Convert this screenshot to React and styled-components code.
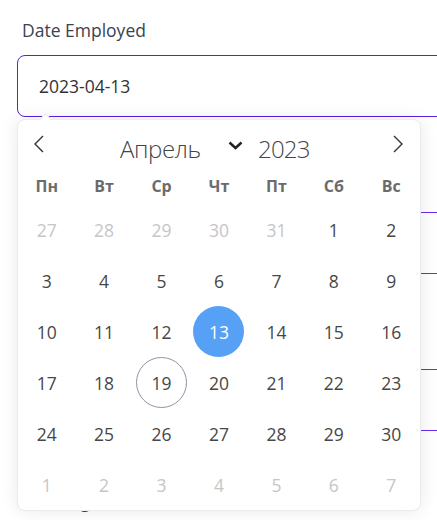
import styled, { createGlobalStyle } from 'styled-components'

const GlobalStyle = createGlobalStyle`
  html, body {
    margin: 0;
    padding: 0;
    background: #ffffff;
    overflow: hidden;
  }
  body {
    font-family: 'Open Sans', 'Noto Sans', sans-serif;
  }
`

const Page = styled.div`
  position: relative;
  width: 460px;
  padding: 18px 0 0 17px;
`
const Field = styled.div`
  display: flex;
  flex-direction: column;
  margin-bottom: 58px;
`
const Label = styled.label`
  font-size: 17.5px;
  line-height: 24px;
  color: #3b4250;
  padding-left: 5px;
  margin-bottom: 13px;
`
const Input = styled.div`
  height: 60px;
  border: 1px solid ${(p) => (p.$active ? '#5720e6' : '#6a2cf0')};
  border-radius: 8px;
  display: flex;
  align-items: center;
  padding-left: 21px;
  font-size: 17.5px;
  color: #333;
`

const Popup = styled.div`
  position: absolute;
  top: 119px;
  left: 17px;
  width: 404px;
  background: #fff;
  border: 1px solid #ececec;
  box-sizing: border-box;
  border-radius: 8px;
  box-shadow: 0 0 18px rgba(0, 0, 0, 0.09);
`
const Notch = styled.span`
  position: absolute;
  top: -5px;
  left: 23px;
  width: 8px;
  height: 8px;
  background: #fff;
  border-top: 1px solid #e6e6e6;
  border-left: 1px solid #e6e6e6;
  transform: rotate(45deg);
`
const Header = styled.div`
  height: 48px;
  display: flex;
  align-items: center;
  padding: 0 15px 0 14px;
`
const NavButton = styled.button`
  border: none;
  background: none;
  padding: 0;
  width: 14px;
  height: 20px;
  display: flex;
  align-items: center;
  justify-content: center;
  color: #333;
`
const MonthYear = styled.div`
  flex: 1;
  display: flex;
  align-items: center;
  padding-top: 8px;
  margin-left: 74px;
`
const MonthText = styled.span`
  font-size: 24px;
  font-weight: 300;
  letter-spacing: -0.4px;
  color: #444;
  width: 108px;
  white-space: nowrap;
`
const Caret = styled.span`
  display: flex;
  margin: -6px 15px 0 0;
  color: #222;
`
const YearText = styled.span`
  font-size: 24px;
  font-weight: 300;
  letter-spacing: -0.8px;
  color: #444;
`
const Grid = styled.div`
  display: grid;
  grid-template-columns: repeat(7, 1fr);
`
const WeekDay = styled.div`
  height: 36px;
  display: flex;
  align-items: center;
  justify-content: center;
  font-size: 16px;
  font-weight: 700;
  color: #6b6b6b;
`
const Day = styled.div`
  justify-self: center;
  width: 51px;
  height: 51px;
  box-sizing: border-box;
  border-radius: 50%;
  display: flex;
  align-items: center;
  justify-content: center;
  font-size: 17.5px;
  color: ${(p) => (p.$selected ? '#fff' : p.$outside ? '#c6c6c6' : '#474747')};
  background: ${(p) => (p.$selected ? '#56a0f6' : 'transparent')};
  border: 1px solid ${(p) => (p.$today ? '#8d95a3' : 'transparent')};
`

const weekDays = ['Пн', 'Вт', 'Ср', 'Чт', 'Пт', 'Сб', 'Вс']

const days = [
  ...[27, 28, 29, 30, 31].map((d) => ({ d, outside: true })),
  ...Array.from({ length: 30 }, (_, i) => ({ d: i + 1 })),
  ...[1, 2, 3, 4, 5, 6, 7].map((d) => ({ d, outside: true })),
]

const fields = ['Date Employed', 'Job Title', 'Department', 'Working Hours']

export default function App() {
  return (
    <>
      <GlobalStyle />
      <Page>
        {fields.map((f, i) => (
          <Field key={f}>
            <Label>{f}</Label>
            <Input $active={i === 0}>{i === 0 ? '2023-04-13' : ''}</Input>
          </Field>
        ))}
        <Popup>
          <Notch />
          <Header>
            <NavButton>
              <svg width="12" height="18" viewBox="0 0 12 18">
                <polyline points="10,1 2,9 10,17" fill="none" stroke="#333" strokeWidth="1.4" />
              </svg>
            </NavButton>
            <MonthYear>
              <MonthText>Апрель</MonthText>
              <Caret>
                <svg width="15" height="9" viewBox="0 0 15 9">
                  <polyline points="1.5,1.5 7.5,7 13.5,1.5" fill="none" stroke="#222" strokeWidth="2.4" />
                </svg>
              </Caret>
              <YearText>2023</YearText>
            </MonthYear>
            <NavButton>
              <svg width="12" height="18" viewBox="0 0 12 18">
                <polyline points="2,1 10,9 2,17" fill="none" stroke="#333" strokeWidth="1.4" />
              </svg>
            </NavButton>
          </Header>
          <Grid>
            {weekDays.map((w) => (
              <WeekDay key={w}>{w}</WeekDay>
            ))}
            {days.map((x, i) => (
              <Day
                key={i}
                $outside={x.outside}
                $selected={!x.outside && x.d === 13}
                $today={!x.outside && x.d === 19}
              >
                {x.d}
              </Day>
            ))}
          </Grid>
        </Popup>
      </Page>
    </>
  )
}
